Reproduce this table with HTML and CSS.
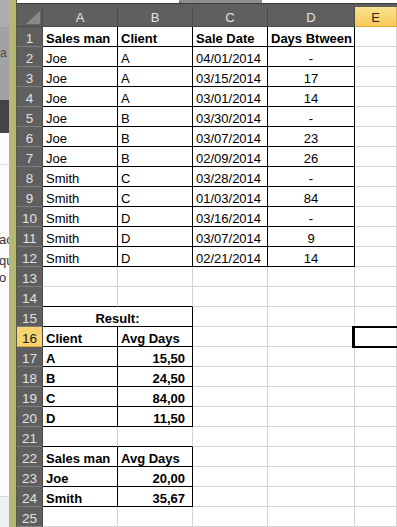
FILE: index.html
```html
<!DOCTYPE html>
<html>
<head>
<meta charset="utf-8">
<link rel="stylesheet" href="styles.css">
</head>
<body>
<div class="screen">
  <div class="behind">
    <div class="bh-top"><span class="bh-a">a :</span></div>
    <div class="bh-dark"></div>
    <div class="bh-body">
      <div class="bh-line"></div>
      <div class="bh-text t1">ac</div>
      <div class="bh-text t2">qu</div>
      <div class="bh-text t3">o</div>
    </div>
    <div class="bh-foot"></div>
  </div>
  <div class="olive"></div>
  <div class="edge"></div>
  <div class="excel">
    <div class="topbar">
      <div class="topstrip"><div class="ts-white1"></div><div class="ts-tab"></div><div class="ts-white2"></div></div>
    </div>
    <div class="sheet">
      <div class="h corner"><svg width="14" height="13" viewBox="0 0 14 13"><polygon points="14,0 14,13 0,13" fill="#8a8a8a"/></svg></div>
      <div class="h">A</div><div class="h">B</div><div class="h">C</div><div class="h">D</div><div class="h hsel">E</div>

      <div class="rh">1</div><div class="c b bold">Sales man</div><div class="c b bold">Client</div><div class="c b bold">Sale Date</div><div class="c b bold">Days Btween</div><div class="c"></div>
      <div class="rh">2</div><div class="c b">Joe</div><div class="c b">A</div><div class="c b">04/01/2014</div><div class="c b ctr">-</div><div class="c"></div>
      <div class="rh">3</div><div class="c b">Joe</div><div class="c b">A</div><div class="c b">03/15/2014</div><div class="c b ctr">17</div><div class="c"></div>
      <div class="rh">4</div><div class="c b">Joe</div><div class="c b">A</div><div class="c b">03/01/2014</div><div class="c b ctr">14</div><div class="c"></div>
      <div class="rh">5</div><div class="c b">Joe</div><div class="c b">B</div><div class="c b">03/30/2014</div><div class="c b ctr">-</div><div class="c"></div>
      <div class="rh">6</div><div class="c b">Joe</div><div class="c b">B</div><div class="c b">03/07/2014</div><div class="c b ctr">23</div><div class="c"></div>
      <div class="rh">7</div><div class="c b">Joe</div><div class="c b">B</div><div class="c b">02/09/2014</div><div class="c b ctr">26</div><div class="c"></div>
      <div class="rh">8</div><div class="c b">Smith</div><div class="c b">C</div><div class="c b">03/28/2014</div><div class="c b ctr">-</div><div class="c"></div>
      <div class="rh">9</div><div class="c b">Smith</div><div class="c b">C</div><div class="c b">01/03/2014</div><div class="c b ctr">84</div><div class="c"></div>
      <div class="rh">10</div><div class="c b">Smith</div><div class="c b">D</div><div class="c b">03/16/2014</div><div class="c b ctr">-</div><div class="c"></div>
      <div class="rh">11</div><div class="c b">Smith</div><div class="c b">D</div><div class="c b">03/07/2014</div><div class="c b ctr">9</div><div class="c"></div>
      <div class="rh">12</div><div class="c b">Smith</div><div class="c b">D</div><div class="c b">02/21/2014</div><div class="c b ctr">14</div><div class="c"></div>
      <div class="rh">13</div><div class="c"></div><div class="c"></div><div class="c"></div><div class="c"></div><div class="c"></div>
      <div class="rh">14</div><div class="c bb"></div><div class="c bb"></div><div class="c"></div><div class="c"></div><div class="c"></div>

      <div class="rh">15</div><div class="c b bold ctr span2">Result:</div><div class="c"></div><div class="c"></div><div class="c"></div>
      <div class="rh rhsel">16</div><div class="c b bold">Client</div><div class="c b bold">Avg Days</div><div class="c"></div><div class="c"></div><div class="c selcell"></div>
      <div class="rh">17</div><div class="c b bold">A</div><div class="c b bold r">15,50</div><div class="c"></div><div class="c"></div><div class="c"></div>
      <div class="rh">18</div><div class="c b bold">B</div><div class="c b bold r">24,50</div><div class="c"></div><div class="c"></div><div class="c"></div>
      <div class="rh">19</div><div class="c b bold">C</div><div class="c b bold r">84,00</div><div class="c"></div><div class="c"></div><div class="c"></div>
      <div class="rh">20</div><div class="c b bold">D</div><div class="c b bold r">11,50</div><div class="c"></div><div class="c"></div><div class="c"></div>
      <div class="rh">21</div><div class="c bb"></div><div class="c bb"></div><div class="c"></div><div class="c"></div><div class="c"></div>
      <div class="rh">22</div><div class="c b bold">Sales man</div><div class="c b bold">Avg Days</div><div class="c"></div><div class="c"></div><div class="c"></div>
      <div class="rh">23</div><div class="c b bold">Joe</div><div class="c b bold r">20,00</div><div class="c"></div><div class="c"></div><div class="c"></div>
      <div class="rh">24</div><div class="c b bold">Smith</div><div class="c b bold r">35,67</div><div class="c"></div><div class="c"></div><div class="c"></div>
      <div class="rh">25</div><div class="c"></div><div class="c"></div><div class="c"></div><div class="c"></div><div class="c"></div>
    </div>
  </div>
</div>
</body>
</html>
```
FILE: styles.css
```css
html, body {
  margin: 0;
  padding: 0;
  background: #ffffff;
}
body {
  width: 397px;
  height: 527px;
  overflow: hidden;
  font-family: "Liberation Sans", Arial, sans-serif;
  font-size: 13px;
}
.screen {
  display: flex;
  width: 397px;
  height: 527px;
}
.behind {
  width: 9px;
  flex: 0 0 9px;
  display: flex;
  flex-direction: column;
  overflow: hidden;
  font-size: 13px;
  color: #333333;
}
.bh-top {
  height: 100px;
  background: linear-gradient(#acacac 0 27px, #a2a2a2 27px);
  position: relative;
}
.bh-a {
  position: absolute;
  left: 0;
  top: 46px;
  white-space: nowrap;
  color: #4a4a4a;
  font-size: 12px;
}
.bh-dark {
  height: 33px;
  background: #444444;
}
.bh-body {
  flex: 1;
  background: #fbfbfb;
  display: flex;
  flex-direction: column;
}
.bh-line {
  margin-top: 31px;
  height: 1px;
  background: #dedede;
}
.bh-text {
  white-space: nowrap;
  line-height: 18px;
  margin-left: -1px;
}
.t1 { margin-top: 66px; }
.t2 { margin-top: 3px; }
.t3 { margin-top: -1px; }
.bh-foot {
  height: 30px;
  border-top: 1px solid #d6d6d6;
  background: #edf1f5;
}
.olive {
  flex: 0 0 7px;
  background: #b5b872;
}
.edge {
  flex: 0 0 1px;
  background: #5a5a4a;
}
.excel {
  flex: 1;
  display: flex;
  flex-direction: column;
}
.topbar {
  height: 7px;
  background: #5e5e5e;
}
.topstrip {
  display: flex;
  height: 3px;
  border-bottom: 1px solid #3a3a3a;
}
.ts-white1 {
  width: 162px;
  background: #ffffff;
}
.ts-tab {
  width: 83px;
  background: #8e8e8e;
  border-bottom-left-radius: 4px;
}
.ts-white2 {
  flex: 1;
  background: #ffffff;
}
.sheet {
  display: grid;
  grid-template-columns: 26px 75px 75px 75px 87px 42px;
  grid-auto-rows: 20px;
}
.sheet > div {
  box-sizing: border-box;
  display: flex;
  align-items: flex-end;
  line-height: 15px;
  white-space: nowrap;
  overflow: hidden;
}
.h {
  background: #5f5f5f;
  color: #e2e2e2;
  border-right: 1px solid #4a4a4a;
  border-bottom: 1px solid #4a4a4a;
  justify-content: center;
  padding-bottom: 1px;
}
.corner {
  align-items: flex-end;
  justify-content: flex-end;
  padding: 0 2px 2px 0;
}
.corner svg { display: block; }
.hsel {
  background: linear-gradient(#fae28f, #f6c95a);
  color: #2a2a2a;
  border-bottom: 1px solid #e3a93b;
  border-right: 1px solid #e0b050;
}
.rh {
  background: #5f5f5f;
  color: #e2e2e2;
  border-bottom: 1px solid #7e7e7e;
  border-right: 1px solid #4a4a4a;
  justify-content: center;
  font-size: 13.5px;
}
.rhsel {
  background: #f9d46e;
  color: #202020;
  border-bottom: 1px solid #e2a63a;
}
.c {
  border-right: 1px solid #d4d4d4;
  border-bottom: 1px solid #d4d4d4;
  padding: 0 3px;
  color: #000000;
  background: #ffffff;
}
.b {
  border-right-color: #000000;
  border-bottom-color: #000000;
}
.bb {
  border-bottom-color: #000000;
}
.bold { font-weight: bold; }
.ctr { justify-content: center; }
.r { justify-content: flex-end; padding-right: 7px; }
.span2 { grid-column: span 2; }
.sheet > .selcell {
  position: relative;
  overflow: visible;
}
.selcell::after {
  content: "";
  position: absolute;
  left: -3px;
  top: -1px;
  width: 60px;
  height: 22px;
  box-sizing: border-box;
  border: 2px solid #000000;
  border-left-width: 3px;
}
```
